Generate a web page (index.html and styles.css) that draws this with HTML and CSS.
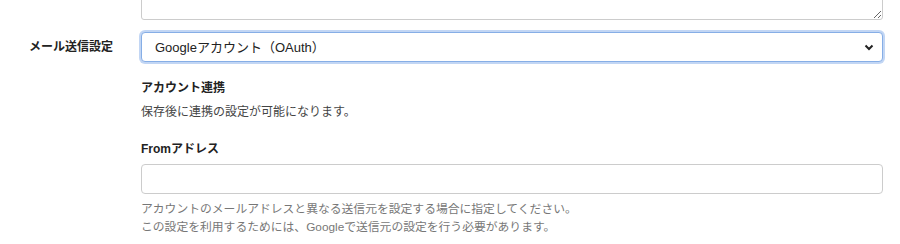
FILE: index.html
```html
<!DOCTYPE html>
<html lang="ja">
<head>
    <meta charset="utf-8">
    <link rel="stylesheet" href="styles.css">
</head>
<body>
    <div class="form">
        <div class="row row-first">
            <div class="label"></div>
            <div class="field">
                <textarea class="textarea"></textarea>
            </div>
        </div>
        <div class="row">
            <div class="label">メール送信設定</div>
            <div class="field">
                <select class="select">
                    <option>Googleアカウント（OAuth）</option>
                </select>
                <h4 class="sub-title first">アカウント連携</h4>
                <p class="note">保存後に連携の設定が可能になります。</p>
                <h4 class="sub-title">Fromアドレス</h4>
                <input type="text" class="input">
                <p class="help">アカウントのメールアドレスと異なる送信元を設定する場合に指定してください。<br>この設定を利用するためには、Googleで送信元の設定を行う必要があります。</p>
            </div>
        </div>
    </div>
</body>
</html>
```

FILE: styles.css
```css
body{
    margin:0;
    background:#fff;
    font-family:"Liberation Sans","Noto Sans CJK JP",sans-serif;
    font-size:12px;
    color:#333;
}
.form{
    width:900px;
}
.row{
    display:grid;
    grid-template-columns:113px 742px;
    column-gap:28px;
    margin-top:12px;
}
.row-first{
    margin-top:-40px;
}
.label{
    text-align:right;
    font-weight:bold;
    font-size:12px;
    color:#222;
    height:30px;
    line-height:30px;
}
.textarea{
    display:block;
    box-sizing:border-box;
    width:100%;
    height:60px;
    margin:0;
    border:1px solid #ccc;
    border-radius:3px;
}
.select{
    display:block;
    box-sizing:border-box;
    width:100%;
    height:30px;
    margin:0;
    padding:0 30px 0 13px;
    font-family:"Liberation Sans","Noto Sans CJK JP",sans-serif;
    font-size:13px;
    color:#222;
    background:#fff url("data:image/svg+xml,%3Csvg xmlns='http://www.w3.org/2000/svg' width='10' height='7' viewBox='0 0 10 7'%3E%3Cpath d='M1.5 1.5 5 5 8.5 1.5' fill='none' stroke='%23222' stroke-width='2'/%3E%3C/svg%3E") no-repeat right 8px center;
    border:1px solid #86aee6;
    border-radius:4px;
    box-shadow:0 0 0 2px rgba(120,165,230,0.45);
    appearance:none;
    -webkit-appearance:none;
    outline:none;
}
.sub-title{
    margin:17px 0 0;
    font-size:12px;
    font-weight:bold;
    line-height:18px;
    color:#222;
}
.sub-title + .note{
    margin-top:6px;
}
.note{
    margin:0;
    line-height:18px;
    color:#444;
}
.note + .sub-title{
    margin-top:19px;
}
.input{
    display:block;
    box-sizing:border-box;
    width:100%;
    height:30px;
    margin:6px 0 0;
    border:1px solid #ccc;
    border-radius:4px;
}
.help{
    margin:6px 0 0;
    font-size:11.8px;
    line-height:18px;
    color:#777;
}
```
